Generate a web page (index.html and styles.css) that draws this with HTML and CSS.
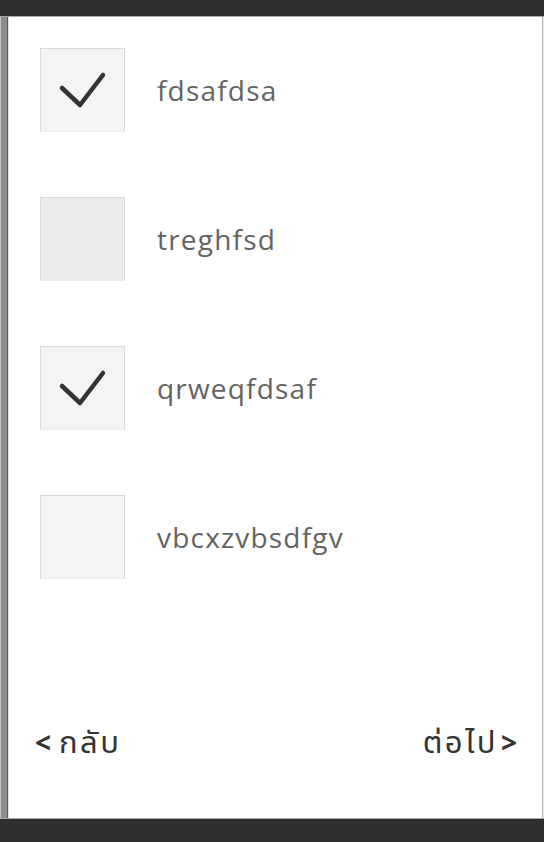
FILE: index.html
```html
<!DOCTYPE html>
<html lang="th">
<head>
<meta charset="utf-8">
<title>Checklist</title>
<link rel="stylesheet" href="styles.css">
</head>
<body>
<div class="frame">
  <div class="topbar"></div>
  <div class="middle">
    <div class="edge-left"></div>
    <main class="content">
      <ul class="list">
        <li class="item">
          <span class="box">
            <svg class="check" viewBox="0 0 85 83" width="85" height="83"><path d="M22 40 L40 57 L63 27" /></svg>
          </span>
          <span class="label">fdsafdsa</span>
        </li>
        <li class="item">
          <span class="box box-hover"></span>
          <span class="label">treghfsd</span>
        </li>
        <li class="item">
          <span class="box">
            <svg class="check" viewBox="0 0 85 83" width="85" height="83"><path d="M22 40 L40 57 L63 27" /></svg>
          </span>
          <span class="label">qrweqfdsaf</span>
        </li>
        <li class="item">
          <span class="box"></span>
          <span class="label">vbcxzvbsdfgv</span>
        </li>
      </ul>
      <nav class="nav">
        <a class="nav-link"><span class="arrow arrow-left">&lt;</span>กลับ</a>
        <a class="nav-link">ต่อไป<span class="arrow arrow-right">&gt;</span></a>
      </nav>
    </main>
    <div class="edge-right"></div>
  </div>
  <div class="bottombar"></div>
</div>
</body>
</html>
```
FILE: styles.css
```css
html, body {
  margin: 0;
  padding: 0;
  background: #ffffff;
}
.frame {
  width: 544px;
  height: 842px;
  display: flex;
  flex-direction: column;
  overflow: hidden;
}
.topbar {
  height: 16px;
  flex: none;
  background: #2f2f2f;
  border-bottom: 1px solid #a8a8a8;
}
.bottombar {
  height: 23px;
  flex: none;
  background: #2f2f2f;
  border-top: 1px solid #a8a8a8;
}
.middle {
  flex: 1;
  display: flex;
  min-height: 0;
}
.edge-left {
  width: 9px;
  flex: none;
  background: linear-gradient(to right, #c4c4c4 0 1px, #8c8c8c 1px 7px, #5a5a5a 7px 8px, #dedede 8px 9px);
}
.edge-right {
  width: 2px;
  flex: none;
  background: linear-gradient(to right, #b4b4b4 0 1px, #e8e8e8 1px 2px);
}
.content {
  flex: 1;
  display: flex;
  flex-direction: column;
  padding: 31px 0 0 31px;
  font-family: "Open Sans", "Noto Sans", "Noto Sans Thai", "Loma", "Garuda", sans-serif;
}
.list {
  list-style: none;
  margin: 0;
  padding: 0;
  display: flex;
  flex-direction: column;
  gap: 66px;
}
.item {
  display: flex;
  align-items: center;
  gap: 32px;
  height: 83px;
}
.box {
  width: 83px;
  height: 82px;
  flex: none;
  background: #f4f4f4;
  border: 1px solid #d9d9d9;
  border-bottom-color: #ececec;
  display: block;
}
.box-hover {
  background: #ececec;
}
.check {
  display: block;
  margin: -1px 0 0 -1px;
}
.check path {
  fill: none;
  stroke: #333333;
  stroke-width: 4.5;
  stroke-linecap: round;
  stroke-linejoin: round;
}
.label {
  font-size: 28px;
  color: #636363;
  line-height: 1;
  letter-spacing: 1.2px;
}
.nav {
  margin: auto 0 0 -5px;
  display: flex;
  justify-content: space-between;
  padding: 0 25px 60px 0;
}
.nav-link {
  font-size: 31px;
  line-height: 32px;
  font-weight: 400;
  color: #333333;
  letter-spacing: 2.5px;
}
.arrow {
  font-size: 28px;
  font-weight: 700;
  letter-spacing: 0;
}
.arrow-left {
  margin-right: 8px;
}
.arrow-right {
  margin-left: 3px;
}
```
